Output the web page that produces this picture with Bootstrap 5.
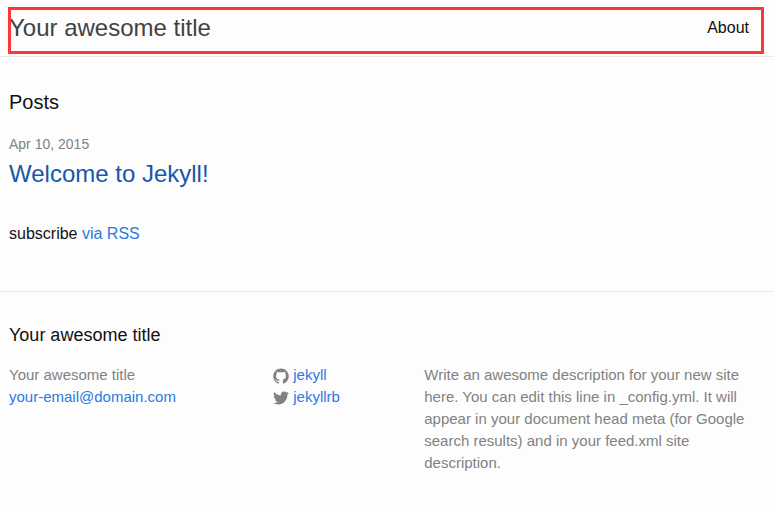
<!DOCTYPE html>
<html lang="en">
<head>
<meta charset="utf-8">
<meta name="viewport" content="width=device-width, initial-scale=1">
<title>Your awesome title</title>
<link href="https://cdn.jsdelivr.net/npm/bootstrap@5.3.0/dist/css/bootstrap.min.css" rel="stylesheet">
<style>
body { font-family: "Liberation Sans", Arial, sans-serif; font-size: 16px; line-height: 24px; color: #111; background: #fdfdfd; }
a { color: #2a7ae2; text-decoration: none; }
a:hover { text-decoration: underline; }
.wrap { padding-left: 9px; padding-right: 25px; }
.site-header { border-bottom: 1px solid #e8e8e8; }
.site-title { font-size: 24px; line-height: 56px; color: #424242; }
.page-link-top { color: #111; line-height: 56px; }
.highlight-box { position: absolute; inset: 7px 10px 2px 8px; border: 3px solid #fb3737; pointer-events: none; }
.site-main { padding-top: 30px; padding-bottom: 45px; }
.posts-heading { font-size: 20px; line-height: 30px; margin-bottom: 15px; font-weight: 400; }
.post-meta { font-size: 14px; line-height: 24px; color: #828282; }
.post-title { font-size: 24px; line-height: 36px; margin-bottom: 30px; font-weight: 400; }
.post-title a { color: #1756a9; }
.site-footer { border-top: 1px solid #e8e8e8; padding-top: 30px; padding-bottom: 30px; }
.footer-heading { font-size: 18px; line-height: 27px; margin-bottom: 15px; font-weight: 400; }
.footer-cols { font-size: 15px; line-height: 22px; color: #828282; margin-left: -15px; }
.footer-cols > * { padding-left: 15px; }
.col-contact { width: 35%; }
.col-social { width: 20%; }
.col-about { width: 45%; }
.social-icon { width: 16px; height: 16px; fill: #828282; margin-top: 2px; }
@media (max-width: 600px) { .footer-cols > * { width: 100%; margin-bottom: 15px; } }
</style>
</head>
<body>
<header class="site-header position-relative">
  <div class="wrap d-flex justify-content-between">
    <a class="site-title" href="#">Your awesome title</a>
    <nav aria-label="Main"><a class="page-link-top d-block" href="#about">About</a></nav>
  </div>
  <div class="highlight-box"></div>
</header>

<main class="site-main wrap">
  <h1 class="posts-heading">Posts</h1>
  <ul class="list-unstyled mb-0">
    <li>
      <span class="post-meta d-block">Apr 10, 2015</span>
      <h2 class="post-title"><a href="#welcome">Welcome to Jekyll!</a></h2>
    </li>
  </ul>
  <p class="mb-0">subscribe <a href="#feed">via RSS</a></p>
</main>

<footer class="site-footer">
  <div class="wrap">
    <h2 class="footer-heading">Your awesome title</h2>
    <div class="footer-cols d-flex flex-wrap">
      <ul class="col-contact list-unstyled mb-0">
        <li>Your awesome title</li>
        <li><a href="mailto:your-email@domain.com">your-email@domain.com</a></li>
      </ul>
      <ul class="col-social list-unstyled mb-0">
        <li><a class="d-flex align-items-center gap-1" href="#github"><svg class="social-icon" viewBox="0 0 16 16" aria-hidden="true"><path d="M7.999,0.431c-4.285,0-7.76,3.474-7.76,7.761 c0,3.428,2.223,6.337,5.307,7.363c0.388,0.071,0.53-0.168,0.53-0.374c0-0.184-0.007-0.672-0.01-1.32 c-2.159,0.469-2.614-1.04-2.614-1.04c-0.353-0.896-0.862-1.135-0.862-1.135c-0.705-0.481,0.053-0.472,0.053-0.472 c0.779,0.055,1.189,0.8,1.189,0.8c0.692,1.186,1.816,0.843,2.258,0.645c0.071-0.502,0.271-0.843,0.493-1.037 C4.86,11.425,3.049,10.76,3.049,7.786c0-0.847,0.302-1.54,0.799-2.082C3.768,5.507,3.501,4.718,3.924,3.65 c0,0,0.652-0.209,2.134,0.796C6.677,4.273,7.34,4.187,8,4.184c0.659,0.003,1.323,0.089,1.943,0.261 c1.482-1.004,2.132-0.796,2.132-0.796c0.423,1.068,0.157,1.857,0.077,2.054c0.497,0.542,0.798,1.235,0.798,2.082 c0,2.981-1.814,3.637-3.543,3.829c0.279,0.24,0.527,0.713,0.527,1.437c0,1.037-0.01,1.874-0.01,2.129 c0,0.208,0.14,0.449,0.534,0.373c3.081-1.028,5.302-3.935,5.302-7.362C15.76,3.906,12.285,0.431,7.999,0.431z"/></svg><span>jekyll</span></a></li>
        <li><a class="d-flex align-items-center gap-1" href="#twitter"><svg class="social-icon" viewBox="0 0 16 16" aria-hidden="true"><path d="M15.969,3.058c-0.586,0.26-1.217,0.436-1.878,0.515c0.675-0.405,1.194-1.045,1.438-1.809 c-0.632,0.375-1.332,0.647-2.076,0.793c-0.596-0.636-1.446-1.033-2.387-1.033c-1.806,0-3.27,1.464-3.27,3.27 c0,0.256,0.029,0.506,0.085,0.745C5.163,5.404,2.753,4.102,1.14,2.124C0.859,2.607,0.698,3.168,0.698,3.767 c0,1.134,0.577,2.135,1.455,2.722C1.616,6.472,1.112,6.325,0.671,6.08c0,0.014,0,0.027,0,0.041c0,1.584,1.127,2.906,2.623,3.206 C3.02,9.402,2.731,9.442,2.433,9.442c-0.211,0-0.416-0.021-0.615-0.059c0.416,1.299,1.624,2.245,3.055,2.271 c-1.119,0.877-2.529,1.4-4.061,1.4c-0.264,0-0.524-0.015-0.78-0.046c1.447,0.928,3.166,1.469,5.013,1.469 c6.015,0,9.304-4.983,9.304-9.304c0-0.142-0.003-0.283-0.009-0.423C14.976,4.29,15.531,3.714,15.969,3.058z"/></svg><span>jekyllrb</span></a></li>
      </ul>
      <p class="col-about mb-0">Write an awesome description for your new site here. You can edit this line in _config.yml. It will appear in your document head meta (for Google search results) and in your feed.xml site description.</p>
    </div>
  </div>
</footer>
<script src="https://cdn.jsdelivr.net/npm/bootstrap@5.3.0/dist/js/bootstrap.bundle.min.js"></script>
</body>
</html>
